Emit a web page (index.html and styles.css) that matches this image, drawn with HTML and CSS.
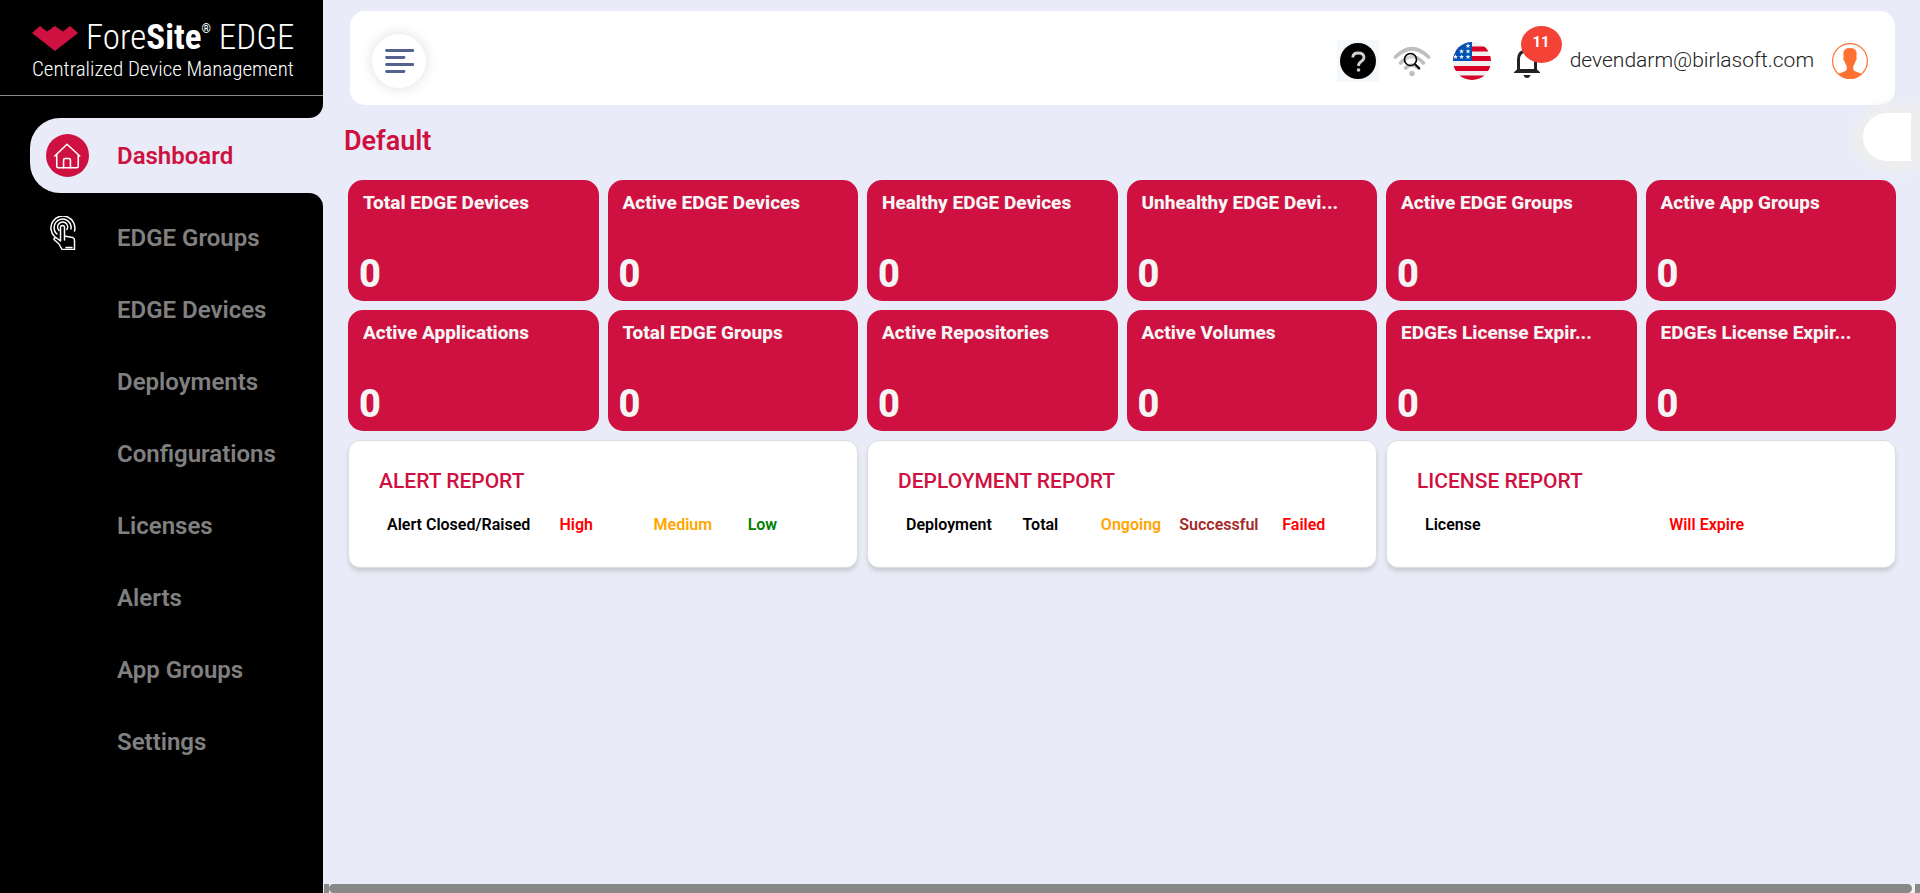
FILE: index.html
```html
<!DOCTYPE html>
<html lang="en">
<head>
<meta charset="utf-8">
<title>ForeSite EDGE - Dashboard</title>
<link rel="stylesheet" href="styles.css">
</head>
<body>
<div class="app">
  <aside class="sidebar">
    <div class="brand">
      <div class="brand-line">
        <svg class="brand-mark" viewBox="0 0 46 25" aria-hidden="true"><path fill="#ce1140" d="M0 7 8 0l7 5.500L23 0l8 5.500L38 0l8 7-23 18z"/></svg>
        <span class="brand-name">Fore<b>Site</b><sup>®</sup> EDGE</span>
      </div>
      <div class="brand-sub">Centralized Device Management</div>
    </div>
    <div class="sidebar-cap"></div>
    <nav class="nav-wrap">
      <ul class="nav">
        <li class="nav-item active"><a href="#" aria-current="page">
          <svg class="nav-icon" viewBox="0 0 44 44" aria-hidden="true"><circle cx="22" cy="22" r="22" fill="#ce1140"/><g fill="none" stroke="#fff" stroke-width="1.600" stroke-linecap="round" stroke-linejoin="round"><path d="M9 22.500 21.500 10.500l13 12M11 21v12q0 1.500 1.500 1.500h19q1.500 0 1.500-1.500V21"/><path d="M18 34.500v-8q0-1.500 1.500-1.500h4q1.500 0 1.500 1.500v8"/></g></svg>
          <span>Dashboard</span></a></li>
        <li class="nav-item"><a href="#">
          <svg class="nav-icon touch" viewBox="0 0 26 34" aria-hidden="true"><g fill="none" stroke="#fff" stroke-width="1.500" stroke-linejoin="round" stroke-linecap="round"><path d="M5 21A12 12 0 1 1 24.500 15"/><path d="M7 18A8.500 8.500 0 1 1 21 13"/><path d="M9 14.500a5 5 0 1 1 8-1"/><path d="M10.500 25V11.500q0-2 2-2t2 2V20l8 1.500q2 .5 2 2.500v9.500H12L9 28l-5-4.500q0-2 2-2l4.500 3.500M14.500 24v-4M16 31.500h6"/></g></svg>
          <span>EDGE Groups</span></a></li>
        <li class="nav-item"><a href="#"><span>EDGE Devices</span></a></li>
        <li class="nav-item"><a href="#"><span>Deployments</span></a></li>
        <li class="nav-item"><a href="#"><span>Configurations</span></a></li>
        <li class="nav-item"><a href="#"><span>Licenses</span></a></li>
        <li class="nav-item"><a href="#"><span>Alerts</span></a></li>
        <li class="nav-item"><a href="#"><span>App Groups</span></a></li>
        <li class="nav-item"><a href="#"><span>Settings</span></a></li>
      </ul>
    </nav>
  </aside>

  <div class="page">
    <header class="topbar">
      <button class="menu-btn" type="button" aria-label="Toggle menu">
        <svg viewBox="0 0 30 24" width="30" height="24" aria-hidden="true"><g stroke="#53628f" stroke-width="2.800" stroke-linecap="round"><path d="M2.500 1.500H29M2.500 8.500H20M2.500 15.500H29M2.500 22.500H20"/></g></svg>
      </button>
      <div class="tools">
        <button class="tool help" type="button" aria-label="Help">
          <svg viewBox="0 0 36 36" width="36" height="36" aria-hidden="true"><circle cx="18" cy="18" r="18" fill="#000"/><path d="M12.800 14.500q0-4.500 5.500-4.500t5.700 4.300q0 2.500-2.800 4.200-2.700 1.700-2.700 4.500" fill="none" stroke="#d0d0d0" stroke-width="2.800"/><circle cx="18.500" cy="27" r="1.800" fill="#d0d0d0"/></svg>
        </button>
        <button class="tool" type="button" aria-label="Network scan">
          <svg viewBox="0 0 38 32" width="38" height="32" aria-hidden="true"><g fill="none" stroke="#bfbfbf" stroke-width="3.600" stroke-linecap="round"><path d="M2.500 12q16.500-16.500 33 0M7.500 18q11.500-12.500 23 0M12.500 23q6.500-6 13 0"/></g><circle cx="19" cy="28.500" r="2.700" fill="#bfbfbf"/><circle cx="17.500" cy="14.500" r="6" fill="#fff" fill-opacity=".3" stroke="#000" stroke-width="1.600"/><path d="m21.800 19 5 5" stroke="#000" stroke-width="2"/></svg>
        </button>
        <button class="tool flag" type="button" aria-label="Language: English (US)">
          <svg viewBox="0 0 38 38" width="38" height="38" aria-hidden="true"><clipPath id="round"><circle cx="19" cy="19" r="19"/></clipPath><g clip-path="url(#round)"><path fill="#f0f0f0" d="M0 0h38v38H0z"/><path fill="#d80027" d="M0 4.500h38v5H0zM0 14h38v5H0zM0 24h38v5H0zM0 33.500h38V38H0z"/><path fill="#0052b4" d="M0 0h19v19H0z"/><g fill="#f0f0f0"><path id="star" d="m15 1.500.7 1.600h1.800L16 4.200l.6 1.800L15 4.900 13.400 6l.6-1.800-1.500-1.100h1.800z"/><use href="#star" y="5.500"/><use href="#star" y="11"/><use href="#star" x="-6.500" y="5.500"/><use href="#star" x="-6.500" y="11"/><use href="#star" x="-12.500" y="11"/></g></g></svg>
        </button>
        <button class="tool bell" type="button" aria-label="Notifications, 11 new">
          <svg viewBox="0 0 28 34" width="28" height="34" aria-hidden="true"><path d="M5.500 27V15.500Q5.500 7 14 7t8.500 8.500V27" fill="none" stroke="#222" stroke-width="3"/><path d="M1 28.200 4.500 25h19l3.500 3.200v.8H1zM10.500 31h7q-.8 3-3.500 3t-3.500-3z" fill="#222"/><path d="M12 3h4v4h-4z" fill="#222"/></svg>
          <span class="badge">11</span>
        </button>
      </div>
      <span class="user-mail">devendarm@birlasoft.com</span>
      <button class="tool" type="button" aria-label="Account">
        <svg viewBox="0 0 36 36" width="36" height="36" aria-hidden="true"><circle cx="18" cy="18" r="17.400" fill="#fff" stroke="#ff7033" stroke-width="1.200"/><path fill="#ff7033" d="M18 5q6.500 0 6.700 5.500L24.300 14q1 .5 0 3-.3 1.500-1 1.600-.5 3-2 4.400v3.500q.5 1.800 8.500 4.300Q25 36 18 36T6.200 30.800q8-2.500 8.500-4.300V23q-1.500-1.400-2-4.400-.7-.1-1-1.600-1-2.500 0-3l-.4-3.500Q11.500 5 18 5z"/></svg>
      </button>
    </header>

    <main class="content">
      <div class="title-row">
        <h1>Default</h1>
        <button class="side-tab" type="button" aria-label="Open panel"></button>
      </div>
      <section class="stats">
        <article class="stat"><h2>Total EDGE Devices</h2><p>0</p></article>
        <article class="stat"><h2>Active EDGE Devices</h2><p>0</p></article>
        <article class="stat"><h2>Healthy EDGE Devices</h2><p>0</p></article>
        <article class="stat"><h2>Unhealthy EDGE Devi...</h2><p>0</p></article>
        <article class="stat"><h2>Active EDGE Groups</h2><p>0</p></article>
        <article class="stat"><h2>Active App Groups</h2><p>0</p></article>
        <article class="stat"><h2>Active Applications</h2><p>0</p></article>
        <article class="stat"><h2>Total EDGE Groups</h2><p>0</p></article>
        <article class="stat"><h2>Active Repositories</h2><p>0</p></article>
        <article class="stat"><h2>Active Volumes</h2><p>0</p></article>
        <article class="stat"><h2>EDGEs License Expir...</h2><p>0</p></article>
        <article class="stat"><h2>EDGEs License Expir...</h2><p>0</p></article>
      </section>
      <section class="reports">
        <article class="report">
          <h2>ALERT REPORT</h2>
          <table class="alerts"><thead><tr><th>Alert Closed/Raised</th><th class="red">High</th><th class="orange">Medium</th><th class="green">Low</th></tr></thead></table>
        </article>
        <article class="report">
          <h2>DEPLOYMENT REPORT</h2>
          <table class="deploys"><thead><tr><th>Deployment</th><th>Total</th><th class="orange">Ongoing</th><th class="brown">Successful</th><th class="red">Failed</th></tr></thead></table>
        </article>
        <article class="report">
          <h2>LICENSE REPORT</h2>
          <table class="licenses"><thead><tr><th>License</th><th class="red">Will Expire</th></tr></thead></table>
        </article>
      </section>
    </main>
    <div class="scrollbar" aria-hidden="true"><i class="end"></i><i class="thumb"></i><i class="end"></i></div>
  </div>
</div>
</body>
</html>
```
FILE: styles.css
```css
* { box-sizing: border-box; }
body {
  margin: 0;
  background: #e9ecf8;
  font-family: Roboto, "Liberation Sans", sans-serif;
  color: #000;
}
h1, h2, p, ul { margin: 0; padding: 0; }
button { border: 0; padding: 0; background: none; font: inherit; cursor: pointer; }
svg { display: block; }
.app { display: flex; min-height: 100vh; }

/* Sidebar */
.sidebar { width: 323px; flex: none; display: flex; flex-direction: column; }
.brand {
  height: 96px;
  padding: 18px 0 0 32px;
  background: #000;
  border-bottom: 1px solid #8a8a8a;
  color: #fff;
  white-space: nowrap;
}
.brand-line { display: flex; align-items: center; gap: 8px; height: 40px; }
.brand-mark { width: 46px; height: 25px; }
.brand-name { font: 300 35px/40px "Roboto Condensed", "Liberation Sans Narrow", Roboto, sans-serif; }
.brand-name b { font-weight: 700; }
.brand-name sup { font-size: 12px; font-weight: 700; line-height: 0; vertical-align: 16px; }
.brand-sub { font: 300 21px/22px "Roboto Condensed", "Liberation Sans Narrow", Roboto, sans-serif; }
.sidebar-cap { height: 22px; background: #000; border-bottom-right-radius: 14px; }
.nav-wrap, .nav { flex: 1; display: flex; flex-direction: column; }
.nav { list-style: none; }
.nav-item { background: #000; }
.nav-item a {
  display: flex;
  align-items: center;
  height: 72px;
  padding-left: 46px;
  color: #808080;
  font-size: 24px;
  font-weight: 600;
  text-decoration: none;
}
.nav-item span { flex: 1; }
.nav-item a > span:only-child { padding-left: 71px; }
.nav-icon { width: 43px; height: 43px; margin-right: 28px; }
.nav-icon.touch { width: 26px; height: 34px; margin: 0 41px 10px 4px; }
.active a {
  height: 75px;
  margin-left: 30px;
  padding-left: 16px;
  border-radius: 30px 0 0 30px;
  background: #e9ecf8;
  color: #ce1140;
}
.active + .nav-item { padding-top: 9px; border-top-right-radius: 14px; }
.nav-item:last-child { flex: 1; }

/* Page */
.page { flex: 1; min-width: 0; display: flex; flex-direction: column; padding-top: 11px; }
.topbar {
  display: flex;
  align-items: center;
  min-height: 94px;
  margin: 0 25px 0 27px;
  padding: 0 27px 0 22px;
  border-radius: 15px;
  background: #fff;
}
.menu-btn {
  display: grid;
  place-items: center;
  width: 54px;
  height: 54px;
  margin-top: 5px;
  border-radius: 50%;
  background: #fff;
  box-shadow: 0 0 14px #dedede;
}
.tools { display: flex; align-items: center; gap: 22px; margin-left: auto; margin-top: 6px; }
.tool { display: block; }
.topbar > .tool { margin-top: 6px; }
.help { padding: 3px; margin-right: -8px; background: #f4f8fb; }
.bell { position: relative; }
.badge {
  position: absolute;
  left: 8px;
  top: -18px;
  width: 41px;
  height: 37px;
  border-radius: 50%;
  background: #f44336;
  color: #fff;
  font-size: 15px;
  font-weight: 700;
  line-height: 32px;
  text-align: center;
}
.user-mail { margin: 4px 18px 0 29px; color: #212121; font-size: 21px; font-weight: 300; line-height: 28px; }

.content { flex: 1; padding: 0 24px 0 25px; }
.title-row { display: flex; justify-content: space-between; margin: 8px -15px 11px -4px; }
.title-row h1 { color: #ce1140; font-size: 27px; font-weight: 600; line-height: 56px; }
.side-tab {
  width: 48px;
  height: 48px;
  border-radius: 24px 0 0 24px;
  background: #fff;
  box-shadow: 0 0 10px 9px #eee;
}
.stats { display: grid; grid-template-columns: repeat(6, minmax(0, 1fr)); gap: 9px; }
.stat {
  display: flex;
  flex-direction: column;
  justify-content: space-between;
  height: 121px;
  padding: 11px 15px 5px;
  border-radius: 15px;
  background: #ce1140;
  color: #f5f5f5;
}
.stat h2 {
  font-size: 19px;
  font-weight: 800;
  line-height: 24px;
  white-space: nowrap;
}
.stat p { margin-left: -4px; font-size: 38px; font-weight: 800; line-height: 44px; }
.reports { display: grid; grid-template-columns: repeat(3, minmax(0, 1fr)); gap: 9px; margin-top: 9px; }
.report {
  height: 128px;
  padding: 26px 30px;
  border: 1px solid #ddd;
  border-radius: 12px;
  background: #fff;
  box-shadow: 0 4px 5px -1px #c4c6cf;
}
.report h2 { margin-bottom: 14px; color: #ce1140; font-size: 21px; font-weight: 500; line-height: 28px; }
.report table { width: 100%; table-layout: fixed; border-collapse: collapse; }
.report th { padding: 0 0 0 8px; font-size: 16px; font-weight: 600; line-height: 32px; text-align: left; white-space: nowrap; }
.alerts th:nth-child(1) { width: 38.5%; }
.alerts th:nth-child(2), .alerts th:nth-child(3) { width: 21%; }
.deploys th:nth-child(1) { width: 26%; }
.deploys th:nth-child(2), .deploys th:nth-child(3) { width: 17.5%; }
.deploys th:nth-child(4) { width: 23%; }
.licenses th:nth-child(1) { width: 54.5%; }
.report .red { color: #f00; }
.report .orange { color: #ffa500; }
.report .green { color: #008000; }
.report .brown { color: #a52a2a; }

.scrollbar { display: flex; height: 9px; margin-left: 1px; background: #f1f1f1; }
.end { width: 5px; background: #888; }
.thumb { flex: 1; margin-right: 3px; border-radius: 5px; background: #888; }
```
